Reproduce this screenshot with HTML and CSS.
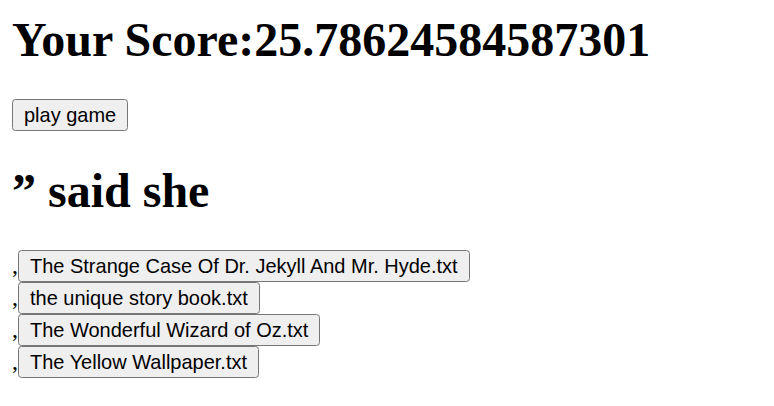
FILE: index.html
```html
<!DOCTYPE html>
<html>
<head>
<meta charset="utf-8">
<link rel="stylesheet" href="styles.css">
</head>
<body>
<div class="app">
<h1 class="score">Your Score:25.78624584587301</h1>
<button class="btn">play game</button>
<h1 class="quote">” said she</h1>
<div class="books">,<button class="btn">The Strange Case Of Dr. Jekyll And Mr. Hyde.txt</button><br>,<button class="btn">the unique story book.txt</button><br>,<button class="btn">The Wonderful Wizard of Oz.txt</button><br>,<button class="btn">The Yellow Wallpaper.txt</button></div>
</div>
</body>
</html>
```
FILE: styles.css
```css
html {
  zoom: 1.5;
}
body {
  margin: 8px;
  font-family: "Liberation Serif", serif;
  background: #fff;
  color: #000;
}
.app {
  display: flow-root;
}
.score {
  margin-top: 0;
}
.btn {
  font-family: "Liberation Sans", Arial, sans-serif;
  font-size: 13.333px;
}
```
